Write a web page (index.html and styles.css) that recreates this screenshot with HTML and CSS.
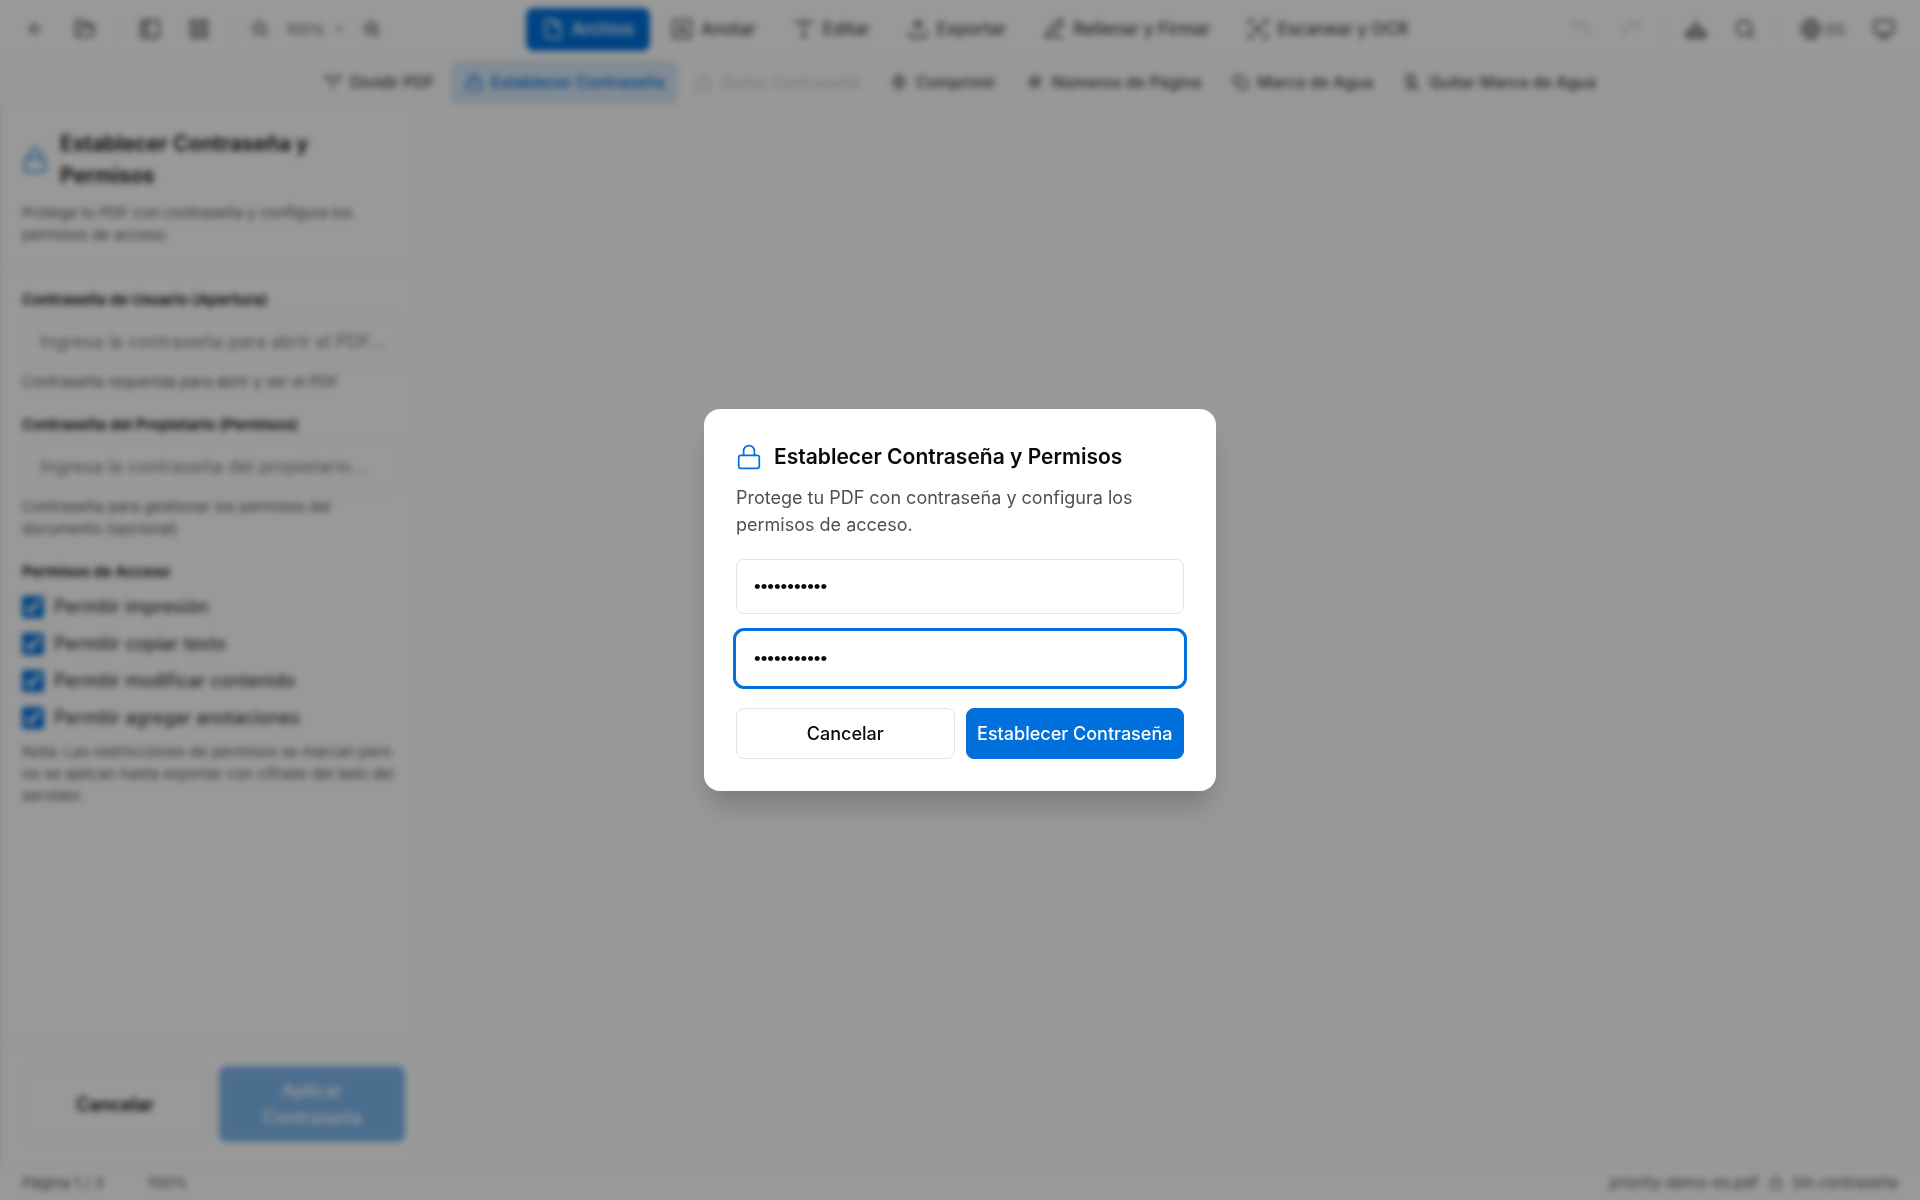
FILE: index.html
```html
<!DOCTYPE html>
<html lang="es">
<head>
<meta charset="utf-8">
<meta name="viewport" content="width=device-width, initial-scale=1">
<title>Establecer Contraseña y Permisos</title>
<link rel="stylesheet" href="styles.css">
</head>
<body>
<svg class="sprite" aria-hidden="true">
  <symbol id="lock" viewBox="0 0 24 24"><rect x="2.500" y="10.500" width="19" height="12" rx="2"/><path d="M7 10.500V6.500a5 5 0 0 1 10 0v4"/></symbol>
  <symbol id="back" viewBox="0 0 24 24"><path d="M20 12H4M12 4l-8 8 8 8"/></symbol>
  <symbol id="folder" viewBox="0 0 24 24"><path d="M6 14l1.500-3a2 2 0 0 1 1.800-1H20a2 2 0 0 1 1.900 2.500l-1.500 6a2 2 0 0 1-2 1.500H4a2 2 0 0 1-2-2V5a2 2 0 0 1 2-2h4l2 3h8a2 2 0 0 1 2 2v2"/></symbol>
  <symbol id="panel" viewBox="0 0 24 24"><rect x="2.500" y="3" width="19" height="18" rx="2"/><path d="M9 3v18M5 8h1M5 12h1"/></symbol>
  <symbol id="grid" viewBox="0 0 24 24"><rect x="3" y="3" width="7" height="7" rx="1"/><rect x="14" y="3" width="7" height="7" rx="1"/><rect x="3" y="14" width="7" height="7" rx="1"/><rect x="14" y="14" width="7" height="7" rx="1"/></symbol>
  <symbol id="zoomout" viewBox="0 0 24 24"><circle cx="11" cy="11" r="8"/><path d="M21 21l-4-4M8 11h6"/></symbol>
  <symbol id="zoomin" viewBox="0 0 24 24"><circle cx="11" cy="11" r="8"/><path d="M21 21l-4-4M8 11h6M11 8v6"/></symbol>
  <symbol id="chev" viewBox="0 0 24 24"><path d="M6 9l6 6 6-6"/></symbol>
  <symbol id="file" viewBox="0 0 24 24"><path d="M14 2H6a2 2 0 0 0-2 2v16a2 2 0 0 0 2 2h12a2 2 0 0 0 2-2V8zM14 2v6h6"/></symbol>
  <symbol id="annotate" viewBox="0 0 24 24"><rect x="2" y="2" width="20" height="20" rx="2"/><path d="M8 17l4-10 4 10M9.500 14h5"/></symbol>
  <symbol id="type" viewBox="0 0 24 24"><path d="M4 7V4h16v3M12 4v16M9 20h6"/></symbol>
  <symbol id="upload" viewBox="0 0 24 24"><path d="M21 15v4a2 2 0 0 1-2 2H5a2 2 0 0 1-2-2v-4M7 8l5-5 5 5M12 3v12"/></symbol>
  <symbol id="download" viewBox="0 0 24 24"><path d="M12 3v11M8 10l4 4 4-4M7 11l-5 5v5h20v-5l-5-5M2 17h20"/></symbol>
  <symbol id="pen" viewBox="0 0 24 24"><path d="M13 21h8M3 21l1-5L17 3a2.500 2.500 0 0 1 4 4L8 20z"/></symbol>
  <symbol id="scan" viewBox="0 0 24 24"><path d="M2 7V2h5M17 2h5v5M22 17v5h-5M7 22H2v-5M8 8l8 8M16 8l-8 8"/></symbol>
  <symbol id="undo" viewBox="0 0 24 24"><path d="M4 4v6h6M4 10c3-4 8-5 12-2 3 2 4 6 3 10"/></symbol>
  <symbol id="redo" viewBox="0 0 24 24"><path d="M20 4v6h-6M20 10c-3-4-8-5-12-2-3 2-4 6-3 10"/></symbol>
  <symbol id="search" viewBox="0 0 24 24"><circle cx="11" cy="11" r="8"/><path d="M21 21l-4-4"/></symbol>
  <symbol id="globe" viewBox="0 0 24 24"><circle cx="12" cy="12" r="10"/><path d="M2 12h20M12 2c5 6 5 14 0 20M12 2c-5 6-5 14 0 20"/></symbol>
  <symbol id="monitor" viewBox="0 0 24 24"><rect x="2" y="3" width="20" height="14" rx="2"/><path d="M8 21h8M12 17v4"/></symbol>
  <symbol id="split" viewBox="0 0 24 24"><path d="M12 21v-8L4 5M12 13l8-8M3 9V4h5M16 4h5v5"/></symbol>
  <symbol id="compress" viewBox="0 0 24 24"><path d="M12 2v20M8 6l4-4 4 4M8 18l4 4 4-4M6 9l-3 3 3 3M18 9l3 3-3 3M3 12h18"/></symbol>
  <symbol id="hash" viewBox="0 0 24 24"><path d="M4 9h16M4 15h16M10 4L8 20M16 4l-2 16"/></symbol>
  <symbol id="mark" viewBox="0 0 24 24"><path d="M15 5a7 7 0 1 0-8 11M16 9h4l2 3v7l-3 3h-6l-3-3v-7l3-3z"/></symbol>
  <symbol id="unmark" viewBox="0 0 24 24"><path d="M3 3l18 18M5 8v12h12M7 3h8v9M10 16l7 1"/></symbol>
</svg>

<div class="app">
  <header class="topbar">
    <div class="tools">
      <button class="tool" aria-label="Volver"><svg class="ico ico-s"><use href="#back"/></svg></button>
      <button class="tool" aria-label="Abrir"><svg class="ico"><use href="#folder"/></svg></button>
      <span class="sep"></span>
      <button class="tool" aria-label="Panel"><svg class="ico"><use href="#panel"/></svg></button>
      <button class="tool" aria-label="Miniaturas"><svg class="ico"><use href="#grid"/></svg></button>
      <span class="sep"></span>
      <div class="zoomer">
        <button class="tool tool-s" aria-label="Reducir"><svg class="ico ico-s"><use href="#zoomout"/></svg></button>
        <button class="zoom">100%<svg class="ico ico-xs"><use href="#chev"/></svg></button>
        <button class="tool tool-s" aria-label="Ampliar"><svg class="ico ico-s"><use href="#zoomin"/></svg></button>
      </div>
    </div>
    <nav class="tabs">
      <button class="tab tab-on"><svg class="ico"><use href="#file"/></svg>Archivo</button>
      <button class="tab"><svg class="ico"><use href="#annotate"/></svg>Anotar</button>
      <button class="tab"><svg class="ico"><use href="#type"/></svg>Editar</button>
      <button class="tab"><svg class="ico"><use href="#upload"/></svg>Exportar</button>
      <button class="tab"><svg class="ico"><use href="#pen"/></svg>Rellenar y Firmar</button>
      <button class="tab"><svg class="ico"><use href="#scan"/></svg>Escanear y OCR</button>
    </nav>
    <div class="tools">
      <button class="tool off" aria-label="Deshacer" disabled><svg class="ico"><use href="#undo"/></svg></button>
      <button class="tool off" aria-label="Rehacer" disabled><svg class="ico"><use href="#redo"/></svg></button>
      <span class="sep"></span>
      <button class="tool" aria-label="Descargar"><svg class="ico"><use href="#download"/></svg></button>
      <button class="tool" aria-label="Buscar"><svg class="ico"><use href="#search"/></svg></button>
      <span class="sep"></span>
      <button class="lang"><svg class="ico"><use href="#globe"/></svg>ES</button>
      <button class="tool" aria-label="Tema"><svg class="ico"><use href="#monitor"/></svg></button>
    </div>
  </header>

  <nav class="subbar">
    <button class="sub"><svg class="ico ico-s"><use href="#split"/></svg>Dividir PDF</button>
    <button class="sub sub-on"><svg class="ico ico-s"><use href="#lock"/></svg>Establecer Contraseña</button>
    <button class="sub off" disabled><svg class="ico ico-s"><use href="#lock"/></svg>Quitar Contraseña</button>
    <button class="sub"><svg class="ico ico-s"><use href="#compress"/></svg>Comprimir</button>
    <button class="sub"><svg class="ico ico-s"><use href="#hash"/></svg>Números de Página</button>
    <button class="sub"><svg class="ico ico-s"><use href="#mark"/></svg>Marca de Agua</button>
    <button class="sub"><svg class="ico ico-s"><use href="#unmark"/></svg>Quitar Marca de Agua</button>
  </nav>

  <div class="work">
    <aside class="side">
      <header class="side-head">
        <div class="title-row"><svg class="ico ico-l blue"><use href="#lock"/></svg><h2 class="title">Establecer Contraseña y Permisos</h2></div>
        <p class="hint">Protege tu PDF con contraseña y configura los permisos de acceso.</p>
      </header>
      <form class="side-body">
        <div class="field">
          <label class="label" for="user">Contraseña de Usuario (Apertura)</label>
          <input class="input" id="user" type="password" placeholder="Ingresa la contraseña para abrir el PDF...">
          <p class="hint">Contraseña requerida para abrir y ver el PDF</p>
        </div>
        <div class="field">
          <label class="label" for="owner">Contraseña del Propietario (Permisos)</label>
          <input class="input" id="owner" type="password" placeholder="Ingresa la contraseña del propietario...">
          <p class="hint">Contraseña para gestionar los permisos del documento (opcional)</p>
        </div>
        <fieldset class="perms">
          <legend class="label">Permisos de Acceso</legend>
          <label class="check"><input type="checkbox" checked>Permitir impresión</label>
          <label class="check"><input type="checkbox" checked>Permitir copiar texto</label>
          <label class="check"><input type="checkbox" checked>Permitir modificar contenido</label>
          <label class="check"><input type="checkbox" checked>Permitir agregar anotaciones</label>
          <p class="hint">Nota: Las restricciones de permisos se marcan pero no se aplican hasta exportar con cifrado del lado del servidor.</p>
        </fieldset>
      </form>
      <footer class="side-foot">
        <button class="btn btn-strong">Cancelar</button>
        <button class="btn btn-blue" disabled>Aplicar Contraseña</button>
      </footer>
    </aside>
    <main class="canvas"></main>
  </div>

  <footer class="status">
    <span>Página 1 / 3</span>
    <span class="status-zoom">100%</span>
    <span class="status-file">priority-demo-es.pdf</span>
    <svg class="ico ico-xs"><use href="#lock"/></svg>
    <span>Sin contraseña</span>
  </footer>
</div>

<div class="overlay">
  <form class="modal" role="dialog" aria-modal="true" aria-labelledby="dlg">
    <div class="title-row"><svg class="ico ico-l blue"><use href="#lock"/></svg><h2 class="title" id="dlg">Establecer Contraseña y Permisos</h2></div>
    <p class="modal-text">Protege tu PDF con contraseña y configura los permisos de acceso.</p>
    <input class="input modal-input" type="password" value="contrasena1" aria-label="Contraseña">
    <input class="input modal-input focused" type="password" value="contrasena1" aria-label="Confirmar contraseña">
    <div class="actions">
      <button class="btn" type="button">Cancelar</button>
      <button class="btn btn-blue" type="button">Establecer Contraseña</button>
    </div>
  </form>
</div>
</body>
</html>
```

FILE: styles.css
```css
* { box-sizing: border-box; }
body, h2, p, fieldset { margin: 0; padding: 0; border: 0; }
body {
  font-family: Inter, "Liberation Sans", sans-serif;
  font-size: 18px;
  line-height: 27px;
  color: #0a0a0a;
  background: #fff;
}
button, input { font: inherit; color: inherit; margin: 0; }
button { background: none; border: 0; padding: 0; }
.sprite { display: none; }
.ico { width: 22px; height: 22px; flex: none; fill: none; stroke: currentColor; stroke-width: 2; stroke-linecap: round; stroke-linejoin: round; }
.ico-l { width: 26px; height: 26px; stroke-width: 1.6; }
.ico-s { width: 18px; height: 18px; }
.ico-xs { width: 14px; height: 14px; }
.blue { color: #0070dc; }

.app { min-height: 100vh; display: flex; flex-direction: column; }

.topbar {
  height: 59px;
  padding: 0 14px;
  display: flex;
  justify-content: space-between;
  align-items: center;
  border-bottom: 1px solid #f0f0f0;
  color: #404040;
}
.tools { display: flex; align-items: center; gap: 5px; }
.tool { width: 44px; height: 44px; display: grid; place-items: center; }
.tool-s { width: 36px; }
.sep { width: 1px; height: 26px; margin: 0 5px; background: #f6f6f6; }
.zoomer { display: flex; align-items: center; gap: 8px; }
.zoom { display: flex; align-items: center; gap: 6px; font-size: 15px; color: #666; }
.lang { display: flex; align-items: center; gap: 4px; padding: 0 12px; font-size: 15px; color: #555; }
.off { opacity: .25; }
.tabs { display: flex; gap: 5px; font-weight: 500; font-size: 17px; }
.tab { height: 43px; padding: 0 16px; display: flex; align-items: center; gap: 8px; border-radius: 8px; color: #484848; }
.tab-on { background: #0070dc; color: #fff; }

.subbar {
  height: 47px;
  display: flex;
  justify-content: center;
  align-items: center;
  gap: 2px;
  font-size: 16px;
  font-weight: 500;
  background: #fdfdfd;
  border-bottom: 1px solid #f4f4f4;
  color: #484848;
}
.sub { height: 43px; padding: 0 14px; display: flex; align-items: center; gap: 8px; border-radius: 8px; }
.sub-on { background: #d8e8f8; color: #0070dc; }

.work { flex: 1; display: flex; }
.side { width: 418px; display: flex; flex-direction: column; border-left: 2px solid #f0f0f0; border-right: 1px solid #f8f8f8; }
.side-head { padding: 22px 20px; border-bottom: 1px solid #ececec; }
.title-row { display: flex; align-items: center; gap: 12px; }
.title { font-size: 21px; line-height: 32px; font-weight: 600; }
.hint { font-size: 15px; line-height: 22px; color: #606060; }
.side-head .hint { margin-top: 10px; }
.side-body { flex: 1; padding: 20px 12px 20px 20px; display: flex; flex-direction: column; gap: 21px; }
.field { display: flex; flex-direction: column; gap: 5px; }
.label { font-size: 15px; line-height: 22px; font-weight: 600; padding: 0; }
.input { width: 100%; height: 50px; padding: 0 17px; border: 1px solid #e4e4e4; border-radius: 8px; background: #fff; outline: 0; }
.input::placeholder { color: #858585; opacity: 1; }
.perms { display: flex; flex-direction: column; gap: 10px; }
.perms .label { margin-bottom: 10px; }
.check { display: flex; align-items: center; gap: 10px; color: #262626; }
.check input { width: 22px; height: 22px; accent-color: #0070dc; }
.side-foot { padding: 21px 12px 22px 20px; display: flex; gap: 11px; border-top: 1px solid #ececec; }
.btn { flex: 1 1 0; min-height: 51px; padding: 0 8px; border: 1px solid #e4e4e4; border-radius: 8px; font-weight: 500; background: #fff; }
.btn-strong { font-weight: 600; }
.btn-blue { background: #0070dc; border-color: #0070dc; color: #fff; }
.btn-blue:disabled { opacity: .5; }
.side-foot .btn { min-height: 76px; padding: 0 20px; }
.canvas { flex: 1; background: #fdfdfd; }

.status { height: 36px; padding: 0 22px; display: flex; align-items: center; font-size: 15px; color: #5c5c5c; border-top: 1px solid #f4f4f4; }
.status-zoom { margin-left: 44px; }
.status-file { margin-left: auto; }
.status .ico { margin: 0 9px 0 11px; }

.overlay { position: fixed; inset: 0; display: grid; place-items: center; background: rgba(0, 0, 0, .4); backdrop-filter: blur(3px); }
.modal { width: 512px; max-width: 100%; padding: 32px; border-radius: 16px; background: #fff; box-shadow: 0 20px 28px -6px rgba(0, 0, 0, .2); }
.modal-text { margin: 11px 0 21px; color: #505050; }
.modal-input { display: block; height: 55px; font-family: "Liberation Sans", sans-serif; font-size: 19px; }
.focused { margin-top: 17px; box-shadow: 0 0 0 3px #0070dc; border-color: #fff; }
.actions { display: flex; gap: 11px; margin-top: 22px; }
.actions .btn { white-space: nowrap; }
```
